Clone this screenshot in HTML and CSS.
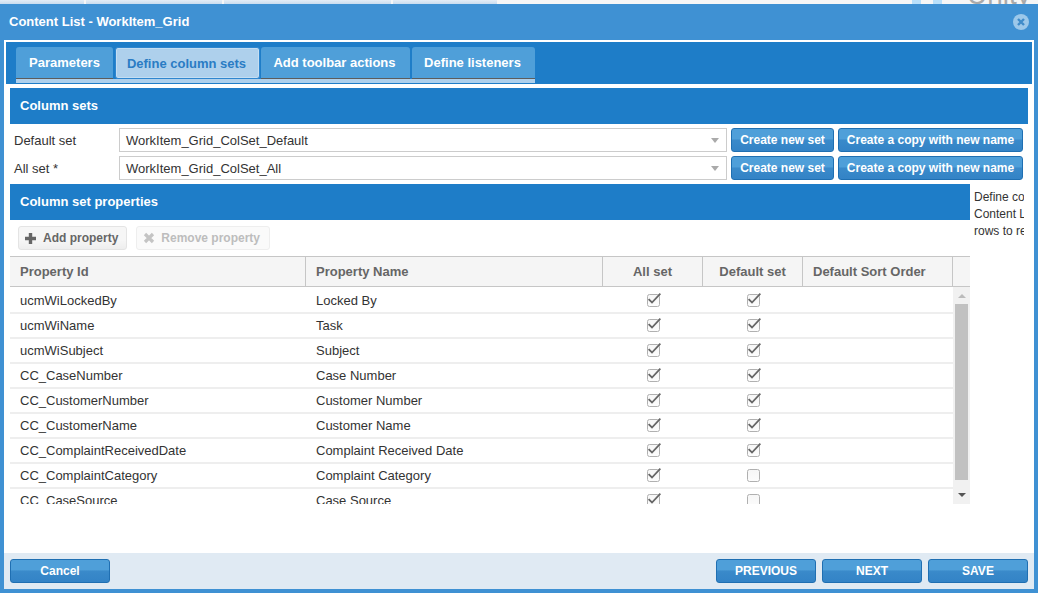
FILE: index.html
```html
<!DOCTYPE html>
<html lang="en">
<head>
<meta charset="utf-8">
<title>Content List - WorkItem_Grid</title>
<link rel="stylesheet" href="styles.css">
</head>
<body>
<svg class="defs" width="0" height="0" aria-hidden="true">
  <defs>
    <linearGradient id="boxfill" x1="0" y1="0" x2="0" y2="1"><stop offset="0" stop-color="#f6f6f6"/><stop offset="1" stop-color="#fcfcfc"/></linearGradient>
    <symbol id="box" viewBox="0 0 14 14"><rect x="0.5" y="1.5" width="12" height="12" rx="2" fill="url(#boxfill)" stroke="#b0b0b0"/></symbol>
    <symbol id="tick" viewBox="0 0 14 14"><rect x="0.5" y="1.5" width="12" height="12" rx="2" fill="url(#boxfill)" stroke="#b0b0b0"/><path d="M1.6 6.2L5 9.5L13.4 0.6" fill="none" stroke="#666" stroke-width="1.8"/></symbol>
  </defs>
</svg>
<div class="backdrop">
  <div class="bg-tabs"><span></span><span></span><span></span><span></span></div>
  <div class="bg-right"><i></i><i></i><b>Unity</b></div>
</div>
<div class="dialog">
  <header class="dlg-head">
    <span class="dlg-title">Content List - WorkItem_Grid</span>
    <svg class="close" width="16" height="16" viewBox="0 0 16 16"><circle cx="8" cy="8" r="8" fill="#9cc8ea"/><path d="M5 5l6 6M11 5l-6 6" stroke="#3f8bc9" stroke-width="2.4" fill="none"/></svg>
  </header>
  <main class="dlg-body">
    <nav class="tabbar">
      <div class="tabs">
        <a class="tab t1">Parameters</a>
        <a class="tab t2 active">Define column sets</a>
        <a class="tab t3">Add toolbar actions</a>
        <a class="tab t4">Define listeners</a>
      </div>
    </nav>
    <div class="content">
      <h2 class="bar">Column sets</h2>
      <div class="formrow">
        <label>Default set</label>
        <div class="select">WorkItem_Grid_ColSet_Default<i class="caret"></i></div>
        <button class="btn small w1">Create new set</button>
        <button class="btn small w2">Create a copy with new name</button>
      </div>
      <div class="formrow">
        <label>All set *</label>
        <div class="select">WorkItem_Grid_ColSet_All<i class="caret"></i></div>
        <button class="btn small w1">Create new set</button>
        <button class="btn small w2">Create a copy with new name</button>
      </div>
      <div class="split">
        <section class="props">
          <h2 class="bar">Column set properties</h2>
          <div class="toolbar">
            <button class="tool add"><svg width="13" height="13" viewBox="0 0 13 13"><path d="M6.5 1v11M1 6.5h11" stroke="#666" stroke-width="3.4"/></svg>Add property</button>
            <button class="tool remove"><svg width="12" height="12" viewBox="0 0 12 12"><path d="M2 2l8 8M10 2l-8 8" stroke="#c4c4c4" stroke-width="3.2"/></svg>Remove property</button>
          </div>
          <div class="grid-head">
            <div class="c1">Property Id</div><div class="c2">Property Name</div><div class="c3">All set</div><div class="c4">Default set</div><div class="c5">Default Sort Order</div><div class="c6"></div>
          </div>
          <div class="grid-body">
            <div class="rows">
              <div class="row"><div class="c1">ucmWiLockedBy</div><div class="c2">Locked By</div><div class="c3"><svg class="chk"><use href="#tick"/></svg></div><div class="c4"><svg class="chk"><use href="#tick"/></svg></div></div>
              <div class="row"><div class="c1">ucmWiName</div><div class="c2">Task</div><div class="c3"><svg class="chk"><use href="#tick"/></svg></div><div class="c4"><svg class="chk"><use href="#tick"/></svg></div></div>
              <div class="row"><div class="c1">ucmWiSubject</div><div class="c2">Subject</div><div class="c3"><svg class="chk"><use href="#tick"/></svg></div><div class="c4"><svg class="chk"><use href="#tick"/></svg></div></div>
              <div class="row"><div class="c1">CC_CaseNumber</div><div class="c2">Case Number</div><div class="c3"><svg class="chk"><use href="#tick"/></svg></div><div class="c4"><svg class="chk"><use href="#tick"/></svg></div></div>
              <div class="row"><div class="c1">CC_CustomerNumber</div><div class="c2">Customer Number</div><div class="c3"><svg class="chk"><use href="#tick"/></svg></div><div class="c4"><svg class="chk"><use href="#tick"/></svg></div></div>
              <div class="row"><div class="c1">CC_CustomerName</div><div class="c2">Customer Name</div><div class="c3"><svg class="chk"><use href="#tick"/></svg></div><div class="c4"><svg class="chk"><use href="#tick"/></svg></div></div>
              <div class="row"><div class="c1">CC_ComplaintReceivedDate</div><div class="c2">Complaint Received Date</div><div class="c3"><svg class="chk"><use href="#tick"/></svg></div><div class="c4"><svg class="chk"><use href="#tick"/></svg></div></div>
              <div class="row"><div class="c1">CC_ComplaintCategory</div><div class="c2">Complaint Category</div><div class="c3"><svg class="chk"><use href="#tick"/></svg></div><div class="c4"><svg class="chk"><use href="#box"/></svg></div></div>
              <div class="row"><div class="c1">CC_CaseSource</div><div class="c2">Case Source</div><div class="c3"><svg class="chk"><use href="#tick"/></svg></div><div class="c4"><svg class="chk"><use href="#box"/></svg></div></div>
            </div>
            <div class="scroll"><i class="up"></i><div class="thumb"></div><i class="down"></i></div>
          </div>
        </section>
        <aside class="help">Define column sets for the<br>Content List and reorder the<br>rows to rearrange columns</aside>
      </div>
    </div>
  </main>
  <footer class="dlg-foot">
    <button class="btn big">Cancel</button>
    <div class="foot-right">
      <button class="btn big">PREVIOUS</button>
      <button class="btn big">NEXT</button>
      <button class="btn big">SAVE</button>
    </div>
  </footer>
</div>
</body>
</html>
```

FILE: styles.css
```css
* { box-sizing: border-box; }
html, body { margin: 0; padding: 0; }
body { width: 1038px; height: 593px; overflow: hidden; font-family: "Liberation Sans", Arial, sans-serif; font-size: 13px; color: #333; background: #fff; }
.defs { position: absolute; }

.backdrop { height: 4px; display: flex; justify-content: space-between; overflow: hidden; background: #f6f6f6; }
.bg-tabs { display: flex; gap: 2px; }
.bg-tabs span { display: block; height: 4px; background: linear-gradient(#e4edf6, #c9dcef); }
.bg-tabs span:nth-child(1) { width: 84px; }
.bg-tabs span:nth-child(2) { width: 136px; }
.bg-tabs span:nth-child(3) { width: 167px; }
.bg-tabs span:nth-child(4) { width: 104px; }
.bg-right { display: flex; width: 126px; height: 4px; }
.bg-right i { display: block; flex: none; width: 9px; height: 4px; background: #b9e0fb; margin-right: 12px; }
.bg-right b { flex: none; font-weight: normal; font-size: 28px; line-height: 28px; margin: -19px 0 0 13px; color: #aaa; }

.dialog { height: 589px; display: flex; flex-direction: column; background: #3f91d3; padding: 0 4px 4px; }
.dlg-head { height: 36px; flex: none; display: flex; align-items: center; justify-content: space-between; padding: 0 5px 0 5px; background: #3f91d3; color: #fff; font-weight: bold; }
.dlg-title { font-size: 13px; margin-bottom: 2px; }
.close { display: block; }

.dlg-body { flex: 1; min-height: 0; background: #fff; padding: 2px 2px 0; overflow: hidden; }
.tabbar { height: 42px; background: #1e7dc8; padding: 5px 0 0 10px; }
.tabs { display: inline-flex; gap: 2px; height: 36px; padding-bottom: 4px; align-items: stretch; background: linear-gradient(#1e7dc8 0, #1e7dc8 32px, #aed0ec 32px); }
.tab { display: flex; flex: none; align-items: center; justify-content: center; height: 32px; background: #4f9fd9; color: #fff; font-weight: bold; border-radius: 3px 3px 0 0; border-bottom: 1px solid #5c5c5c; }
.t1 { width: 97px; }
.t2 { width: 145px; margin-right: -1px; padding-right: 2px; }
.t3 { width: 149px; padding-right: 2px; }
.t4 { width: 123px; padding-right: 2px; }
.tab.active { background: #aed0ec; color: #2a7cc4; border: 1px solid #2f86cf; border-radius: 3px; box-shadow: inset 0 0 0 1px #c4def2; }

.content { padding: 4px 4px 0; display: flex; flex-direction: column; }
.bar { margin: 0; height: 36px; line-height: 36px; padding: 0 10px; background: #1e7dc8; color: #fff; font-size: 13px; font-weight: bold; }

.formrow { display: flex; align-items: center; height: 24px; margin-top: 4px; padding-right: 5px; }
.formrow label { width: 109px; padding-left: 4px; }
.select { position: relative; width: 608px; height: 24px; margin-right: 4px; padding-left: 6px; line-height: 24px; border: 1px solid #ccc; background: #fff; }
.caret { position: absolute; right: 7px; top: 9px; width: 0; height: 0; border-left: 4px solid transparent; border-right: 4px solid transparent; border-top: 5px solid #aaa; }

.btn { display: block; padding: 0; height: 24px; border: 1px solid #1f6fb2; border-radius: 3px; color: #fff; font-family: inherit; font-weight: bold; background: linear-gradient(#4f9fd9, #4f9fd9 45%, #3a8aca 50%, #3383c6); }
.btn.small { font-size: 12px; }
.w1 { width: 103px; margin-right: 4px; }
.w2 { width: 185px; }
.btn.big { width: 100px; font-size: 12px; }

.split { display: flex; margin-top: 4px; }
.props { width: 960px; flex: none; }
.help { width: 54px; overflow: hidden; white-space: nowrap; padding: 5px 0 0 4px; font-size: 12px; line-height: 17px; color: #333; }

.toolbar { height: 36px; display: flex; align-items: center; gap: 9px; padding: 0 0 0 8px; }
.tool { display: flex; align-items: center; height: 24px; padding: 0 8px 0 5px; gap: 6px; font-family: inherit; font-size: 12px; font-weight: bold; border: 1px solid #e4e4e4; border-radius: 3px; background: linear-gradient(#f6f6f6, #f6f6f6 60%, #eeeeee); color: #666; }
.tool.remove { color: #bdbdbd; background: #fafafa; border-color: #eee; padding: 0 9px 0 6px; }

.grid-head { display: flex; height: 31px; background: #f5f5f5; border-top: 1px solid #c6c6c6; border-bottom: 1px solid #c6c6c6; font-weight: bold; color: #666; line-height: 29px; }
.grid-head > div { border-right: 1px solid #c6c6c6; flex: none; }
.grid-head > .c6 { border-right: 0; width: 18px; }
.c1, .c2, .c5 { padding-left: 10px; }
.c1 { width: 296px; }
.c2 { width: 297px; }
.c3 { width: 100px; text-align: center; }
.c4 { width: 100px; text-align: center; }
.c5 { width: 150px; }

.grid-body { display: flex; height: 217px; overflow: hidden; }
.rows { width: 943px; flex: none; }
.row { display: flex; height: 25px; line-height: 23px; border-top: 2px solid #eee; }
.row:first-child { border-top-color: transparent; }
.row > div { flex: none; }
.row .c3, .row .c4 { padding-left: 2px; }

.chk { display: inline-block; width: 14px; height: 14px; margin-top: 4px; vertical-align: top; overflow: visible; }

.scroll { width: 17px; flex: none; background: #f1f1f1; position: relative; display: flex; flex-direction: column; align-items: center; }
.scroll .up { position: absolute; top: 7px; width: 0; height: 0; border-left: 4px solid transparent; border-right: 4px solid transparent; border-bottom: 4px solid #bbb; }
.scroll .down { position: absolute; bottom: 7px; width: 0; height: 0; border-left: 4px solid transparent; border-right: 4px solid transparent; border-top: 4px solid #555; }
.thumb { width: 13px; height: 176px; margin-top: 17px; background: #c1c1c1; }

.dlg-foot { height: 36px; flex: none; display: flex; align-items: center; justify-content: space-between; padding: 0 6px; background: #e0eaf3; }
.foot-right { display: flex; gap: 6px; }
```
